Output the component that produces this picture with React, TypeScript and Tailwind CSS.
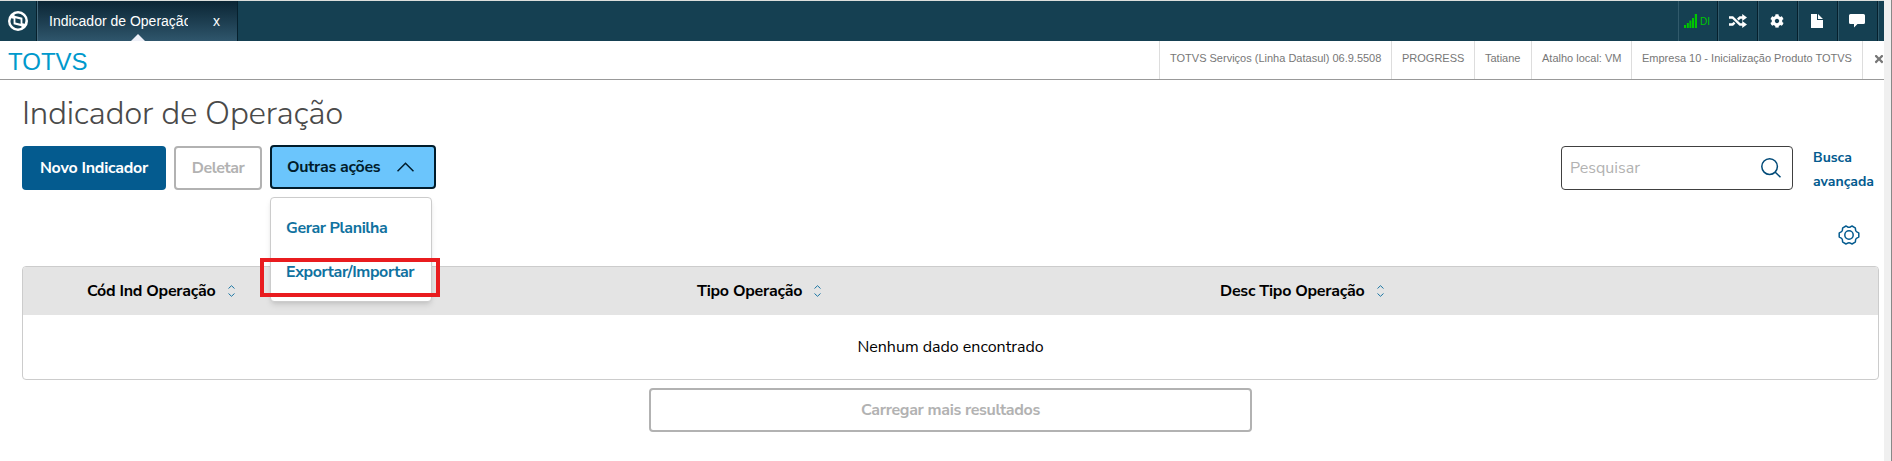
import React from "react";
import { FaCog, FaTimes } from "react-icons/fa";

const LogoIcon = () => (
  <svg width="20" height="20" viewBox="0 0 20 20">
    <circle cx="10" cy="10" r="10" fill="#fff" />
    <g fill="#154052">
      <path d="M6.5 3.6A7.3 7.3 0 0 1 16.8 12.8L14.4 12.2V6.8L6.5 4.8Z" />
      <path d="M13.5 16.4A7.3 7.3 0 0 1 3.2 7.2L5.6 7.8V13.2L13.5 15.2Z" />
      <path d="M7.4 7.2 12.6 8.5V12.8L7.4 11.5Z" />
    </g>
  </svg>
);

const SignalIcon = () => (
  <svg width="13" height="14" viewBox="0 0 13 14" fill="#00c800">
    <path d="M0 11h2v3H0zM2.8 9h2v5h-2zM5.4 6.5h2V14h-2zM8 4h2v10H8zM10.8 0h2.2v14h-2.2z" />
  </svg>
);

const ShuffleIcon = () => (
  <svg width="18" height="14" viewBox="0 0 18 14">
    <path
      d="M0 3.5h3.6L11 10.5h3M0 10.5h3.6L5.6 8.7M8.8 5.5 11 3.5h3"
      fill="none"
      stroke="#fff"
      strokeWidth="2.4"
    />
    <path d="M13.2 0 18 3.5 13.2 7zM13.2 7 18 10.5 13.2 14z" fill="#fff" />
  </svg>
);

const FileIcon = () => (
  <svg width="12" height="14" viewBox="0 0 12 14" fill="#fff">
    <path d="M0 0h6v6h6v8H0zM7 0l5 5H7z" />
  </svg>
);

const CommentIcon = () => (
  <svg width="16" height="14" viewBox="0 0 16 14" fill="#fff">
    <path d="M1.5 0h13Q16 0 16 1.5v7Q16 10 14.5 10H8.5L5 13.5V10H1.5Q0 10 0 8.5v-7Q0 0 1.5 0z" />
  </svg>
);

const SortIcon = () => (
  <svg
    width="7"
    height="12"
    viewBox="0 0 7 12"
    fill="none"
    stroke="#1a75a3"
    strokeWidth="1"
  >
    <path d="M.5 3.5 3.5.7 6.5 3.5M.5 8.5 3.5 11.3 6.5 8.5" />
  </svg>
);

const SearchIcon = () => (
  <svg
    width="20"
    height="20"
    viewBox="0 0 20 20"
    fill="none"
    stroke="#004a78"
    strokeWidth="1.5"
  >
    <circle cx="8.6" cy="8.6" r="7.8" />
    <path d="M14 14l5.5 5.3" />
  </svg>
);

const GearIcon = () => (
  <svg
    width="22"
    height="20"
    viewBox="0 0 22 20"
    fill="none"
    stroke="#045b8f"
    strokeWidth="1.5"
    strokeLinejoin="round"
  >
    <path d="M8 1C9 1 9.4 2.3 11 2.3S13 1 14 1L17.2 2.8C17.8 3.4 17.1 4.6 17.9 6S20.5 7.3 20.8 8.1V11.9C20.5 12.7 18.7 12.6 17.9 14S17.8 16.6 17.2 17.2L14 19C13 19 12.6 17.7 11 17.7S9 19 8 19L4.8 17.2C4.2 16.6 4.9 15.4 4.1 14S1.5 12.7 1.2 11.9V8.1C1.5 7.3 3.3 7.4 4.1 6S4.2 3.4 4.8 2.8Z" />
    <circle cx="11" cy="10" r="4.2" />
  </svg>
);

const Header = () => {
  return (
    <header>
      <div className="flex h-[41px] border-t border-[#dcdfdc] bg-[#154052] font-['Liberation_Sans'] text-white">
        <div className="w-[37px] flex items-center justify-center pr-px border-r border-[#06202d]">
          <LogoIcon />
        </div>
        <div className="relative w-[201px] flex items-center border-l border-[#44687a] border-r border-r-[#06202d] bg-linear-to-b from-[#0b2635] to-[#2f566c]">
          <span className="ml-[11px] w-[139px] overflow-hidden whitespace-nowrap text-sm leading-5">
            Indicador de Operação
          </span>
          <span className="ml-[25px] text-sm leading-5">x</span>
          <svg
            className="absolute left-[93px] bottom-0"
            width="14"
            height="7"
            fill="#eef0f8"
          >
            <path d="M0 7 7 0 14 7z" />
          </svg>
        </div>
        <div className="ml-auto flex">
          <div className="w-10 pr-0.5 flex items-center justify-center gap-[3px] border-l border-r border-l-[#315a6b] border-r-[#06202d] text-[10px] text-[#00c800]">
            <SignalIcon />
            DI
          </div>
          <div className="w-10 flex items-center justify-center border-l border-r border-l-[#315a6b] border-r-[#06202d]">
            <ShuffleIcon />
          </div>
          <div className="w-10 pr-0.5 flex items-center justify-center border-l border-r border-l-[#315a6b] border-r-[#06202d]">
            <FaCog size={14} />
          </div>
          <div className="w-10 pr-0.5 flex items-center justify-center border-l border-r border-l-[#315a6b] border-r-[#06202d]">
            <FileIcon />
          </div>
          <div className="w-10 pr-0.5 flex items-center justify-center border-l border-r border-l-[#315a6b] border-r-[#06202d]">
            <CommentIcon />
          </div>
          <div className="w-[6px] border-l border-l-[#315a6b]" />
        </div>
      </div>

      <div className="flex h-[39px] border-b border-[#999] font-['Liberation_Sans'] bg-white">
        <span className="ml-2 mt-1.5 text-2xl leading-[30px] text-[#0099cc]">
          TOTVS
        </span>
        <div className="ml-auto flex text-[11px] leading-[35px] text-[#777] whitespace-nowrap">
          <span className="w-[232px] pl-2.5 border-l border-[#ddd]">
            TOTVS Serviços (Linha Datasul) 06.9.5508
          </span>
          <span className="w-[83px] pl-2.5 border-l border-[#ddd]">
            PROGRESS
          </span>
          <span className="w-[57px] pl-2.5 border-l border-[#ddd]">
            Tatiane
          </span>
          <span className="w-[100px] pl-2.5 border-l border-[#ddd]">
            Atalho local: VM
          </span>
          <span className="w-[231px] pl-2.5 border-l border-[#ddd]">
            Empresa 10 - Inicialização Produto TOTVS
          </span>
          <span className="w-[22px] pl-2.5 pt-3 border-l border-[#ddd] overflow-hidden">
            <FaTimes size={12} className="shrink-0 max-w-none" />
          </span>
        </div>
      </div>
    </header>
  );
};

const Actions = () => {
  return (
    <div className="flex">
      <button className="w-36 h-11 rounded bg-[#045b8f] text-white font-bold tracking-[-0.25px]">
        Novo Indicador
      </button>
      <button className="ml-2 w-[88px] h-11 rounded border-2 border-[#b2b2b2] text-[#b2b2b2] font-bold tracking-[-0.45px]">
        Deletar
      </button>
      <div className="relative ml-2 -mt-px">
        <button className="w-[166px] h-11 pl-[15px] flex items-center rounded border-2 border-[#001c2b] bg-[#6bc5fc] text-[#001c2b] font-bold tracking-[-0.3px]">
          <span className="w-[94px] whitespace-nowrap text-left">
            Outras ações
          </span>
          <svg
            className="ml-4"
            width="17"
            height="10"
            fill="none"
            stroke="#001c2b"
            strokeWidth="1.5"
          >
            <path d="M.5 9.3 8.5 1.2 16.5 9.3" />
          </svg>
        </button>
        <div className="absolute z-10 top-[52px] left-0 w-[162px] h-[105px] pl-[15px] pt-2 rounded border border-[#ccc] bg-white shadow-md text-[#1072a0] font-bold leading-11 whitespace-nowrap tracking-[-0.4px]">
          <div>Gerar Planilha</div>
          <div>Exportar/Importar</div>
        </div>
        <div className="absolute z-20 top-[113px] -left-2.5 w-[180px] h-[39px] border-4 border-[#e91c1f]" />
      </div>
    </div>
  );
};

const Table = () => {
  return (
    <div className="h-[114px] rounded border border-[#ccc] overflow-hidden">
      <div className="grid grid-cols-[610px_523px_1fr] h-12 bg-[#e4e4e4] font-bold text-black tracking-[-0.25px]">
        <div className="pl-16 flex items-center gap-[13px]">
          <span>Cód Ind Operação</span>
          <SortIcon />
        </div>
        <div className="pl-16 flex items-center gap-3">
          <span>Tipo Operação</span>
          <SortIcon />
        </div>
        <div className="pl-16 flex items-center gap-[13px]">
          <span>Desc Tipo Operação</span>
          <SortIcon />
        </div>
      </div>
      <div className="h-16 flex items-center justify-center text-black">
        Nenhum dado encontrado
      </div>
    </div>
  );
};

const App = () => {
  return (
    <div className="flex w-[1892px] h-[461px] overflow-hidden bg-white">
      <div className="w-[1884px]">
        <Header />
        <main className="pl-[22px] pr-[5px] pt-3 font-['Nunito_Sans','Nunito','Open_Sans',sans-serif] text-base">
          <h1 className="h-[54px] pt-0.5 text-[33px] leading-10 font-light tracking-[-0.25px] text-[#4a4a4a]">
            Indicador de Operação
          </h1>
          <div className="flex justify-between">
            <Actions />
            <div className="flex">
              <div className="w-[232px] h-11 pl-2 pr-[11px] flex items-center justify-between rounded border border-[#404040] text-[#b2b2b2]">
                <span>Pesquisar</span>
                <SearchIcon />
              </div>
              <div className="ml-5 w-[66px] text-sm leading-6 font-bold text-[#045b8f]">
                Busca avançada
              </div>
            </div>
          </div>
          <div className="flex justify-end h-[76px] pt-[35px] pr-[19px] -mt-1">
            <GearIcon />
          </div>
          <Table />
          <button className="block mx-auto mt-2 w-[603px] h-11 rounded border-2 border-[#b2b2b2] text-[#b2b2b2] font-bold tracking-[-0.33px]">
            Carregar mais resultados
          </button>
        </main>
      </div>
      <div className="w-2 bg-[#f0f0f0] border-r border-[#888]" />
    </div>
  );
};

export default App;
